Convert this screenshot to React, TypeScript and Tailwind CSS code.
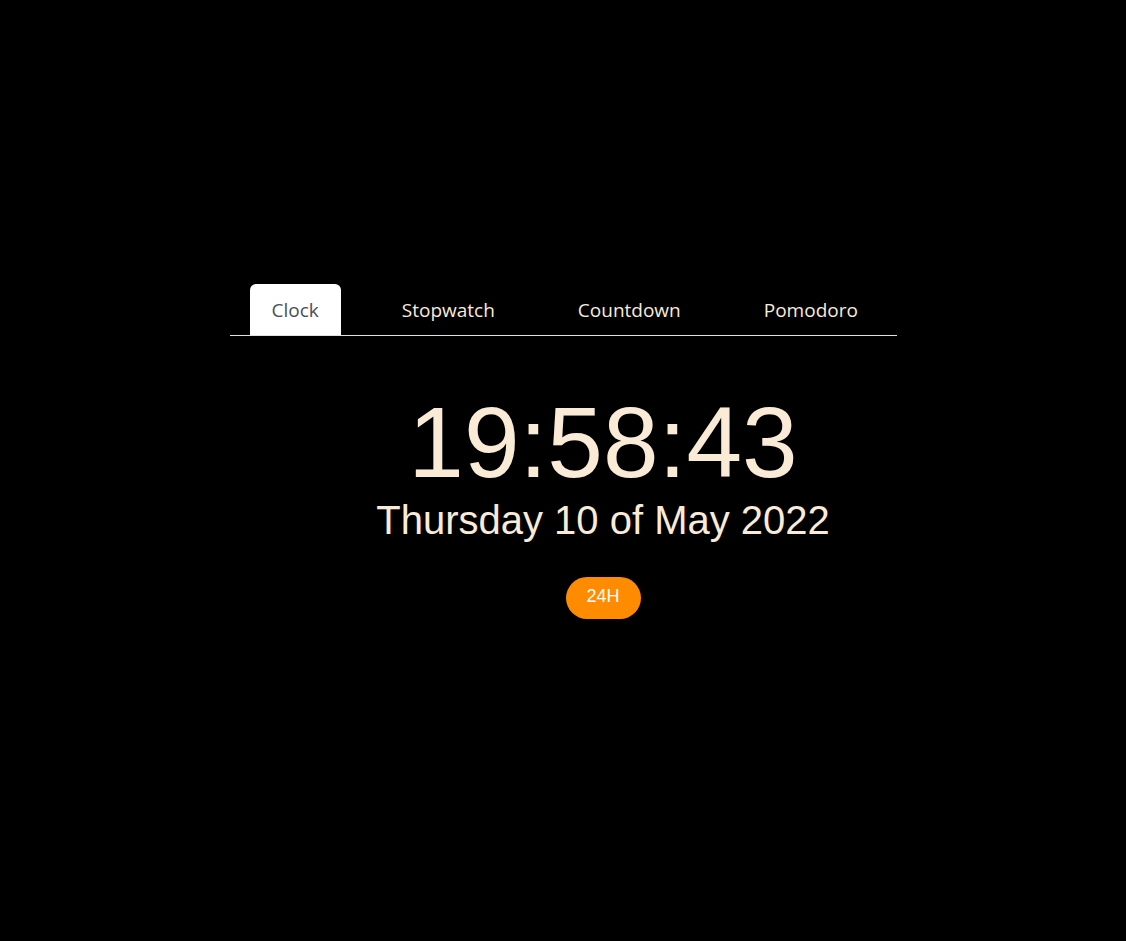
import React from 'react';

const tabs = ['Clock', 'Stopwatch', 'Countdown', 'Pomodoro'];

export default function App() {
  const active = 'Clock';

  return (
    <div className="min-h-[941px] w-full bg-black flex flex-col items-center pt-[284px]">
      {/* Tab bar */}
      <div className="w-[667px] flex gap-[39px] pl-5 border-b border-[#dee2e6]">
        {tabs.map((tab) => (
          <button
            key={tab}
            className={`h-[51px] px-[22px] pt-[2px] text-[19px] font-['Open_Sans',sans-serif] rounded-t-md ${
              tab === active ? 'bg-white text-[#495057]' : 'text-[#faebd7]'
            }`}
          >
            {tab}
          </button>
        ))}
      </div>

      {/* Clock content */}
      <div className="w-[667px] pl-[80px] flex flex-col items-center pt-[56px] font-['Liberation_Sans',Arial,sans-serif] text-[#faebd7]">
        <div className="text-[100px] leading-none">19:58:43</div>
        <div className="text-[40px] leading-none mt-[8px]">Thursday 10 of May 2022</div>
        <button className="mt-[37px] w-[75px] h-[42px] pb-[3px] rounded-full bg-[#ff8c00] text-white text-[18px]">
          24H
        </button>
      </div>
    </div>
  );
}
